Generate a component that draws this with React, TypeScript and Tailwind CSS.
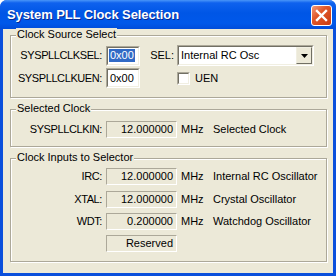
import React from "react";

const face = "bg-[#ECE9D8]";

function Group({ title, className, children }: { title: string; className: string; children?: React.ReactNode }) {
  return (
    <div className={`relative border border-[#ACA899] shadow-[inset_1px_1px_0_#fff,1px_1px_0_#fff] ${className}`}>
      <span className={`absolute left-[5px] top-[-8px] px-[1px] leading-[13px] ${face}`}>{title}</span>
      {children}
    </div>
  );
}

function Sunken2({ className, children }: { className: string; children?: React.ReactNode }) {
  return (
    <div className={`border border-t-[#ACA899] border-l-[#ACA899] border-b-white border-r-white ${className}`}>
      <div className="h-full w-full border border-t-[#716F64] border-l-[#716F64] border-b-[#F1EFE2] border-r-[#F1EFE2] bg-white flex items-center">
        {children}
      </div>
    </div>
  );
}

function ReadBox({ text }: { text: string }) {
  return (
    <div className="ml-[4px] w-[71px] h-[17px] border border-t-[#ACA899] border-l-[#ACA899] border-b-white border-r-white flex items-center justify-end pr-[3px] leading-[13px]">
      {text}
    </div>
  );
}

function ValueRow({ label, value, desc, className = "" }: { label: string; value: string; desc?: string; className?: string }) {
  return (
    <div className={`flex items-center h-[17px] ${className}`}>
      <div className="w-[91px] text-right tracking-[-0.4px] leading-[13px]">{label}</div>
      <ReadBox text={value} />
      {desc !== undefined && (
        <>
          <div className="ml-[4px] w-[32px] leading-[13px]">MHz</div>
          <div className="leading-[13px]">{desc}</div>
        </>
      )}
    </div>
  );
}

export default function App() {
  return (
    <div className="w-[336px] h-[276px] flex flex-col bg-[#0A4FDC] rounded-t-[7px] overflow-hidden font-['Liberation_Sans',Arial,sans-serif] text-[11px] text-black">
      {/* Title bar */}
      <div className="h-[29px] shrink-0 flex items-start justify-between pl-[7px] pr-[4px] bg-[linear-gradient(180deg,#4A96F8_0%,#0F62EE_10%,#0056E6_45%,#0058EA_80%,#004CDA_100%)]">
        <div className="mt-[7px] text-white font-bold text-[13px] tracking-[-0.1px] leading-[16px] [text-shadow:1px_1px_0_#0A2A90]">
          System PLL Clock Selection
        </div>
        <div className="mt-[5px] w-[21px] h-[21px] rounded-[3px] border border-white bg-[linear-gradient(135deg,#F39A7C_0%,#E0582A_40%,#C93A12_100%)] flex items-center justify-center">
          <svg width="19" height="19" viewBox="0 0 19 19">
            <path d="M5 5 L14 14 M14 5 L5 14" stroke="#fff" strokeWidth="2.4" strokeLinecap="square" />
          </svg>
        </div>
      </div>

      {/* Body */}
      <div className={`flex-1 mx-[3px] mb-[3px] ${face} pt-[6px] pl-[7px] pr-[6px]`}>
        <Group title="Clock Source Select" className="h-[63px] pt-[9px]">
          <div className="flex items-center h-[21px]">
            <div className="w-[91px] text-right tracking-[-0.4px] leading-[13px]">SYSPLLCLKSEL:</div>
            <Sunken2 className="ml-[4px] w-[34px] h-[20px]">
              <span className="ml-[1px] bg-[#316AC5] text-white leading-[13px] px-[1px]">0x00</span>
            </Sunken2>
            <div className="w-[37px] text-right pr-[3px] leading-[13px]">SEL:</div>
            <Sunken2 className="w-[137px] h-[21px]">
              <span className="flex-1 pl-[2px] leading-[13px]">Internal RC Osc</span>
              <div className="w-[16px] h-full border border-t-[#F1EFE2] border-l-[#F1EFE2] border-b-[#716F64] border-r-[#716F64] bg-[#ECE9D8] flex items-center justify-center">
                <svg width="7" height="4" viewBox="0 0 7 4">
                  <path d="M0 0 H7 L3.5 4 Z" fill="#000" />
                </svg>
              </div>
            </Sunken2>
          </div>
          <div className="flex items-center h-[20px] mt-[2px]">
            <div className="w-[91px] text-right tracking-[-0.4px] leading-[13px]">SYSPLLCLKUEN:</div>
            <Sunken2 className="ml-[4px] w-[34px] h-[20px]">
              <span className="ml-[2px] leading-[13px]">0x00</span>
            </Sunken2>
            <div className="w-[37px]" />
            <Sunken2 className="w-[13px] h-[13px]" />
            <div className="ml-[5px] leading-[13px]">UEN</div>
          </div>
        </Group>

        <Group title="Selected Clock" className="h-[38px] mt-[11px] pt-[11px]">
          <ValueRow label="SYSPLLCLKIN:" value="12.000000" desc="Selected Clock" />
        </Group>

        <Group title="Clock Inputs to Selector" className="h-[104px] mt-[11px] pt-[9px]">
          <ValueRow label="IRC:" value="12.000000" desc="Internal RC Oscillator" />
          <ValueRow label="XTAL:" value="12.000000" desc="Crystal Oscillator" className="mt-[6px]" />
          <ValueRow label="WDT:" value="0.200000" desc="Watchdog Oscillator" className="mt-[5px]" />
          <ValueRow label="" value="Reserved" className="mt-[5px]" />
        </Group>
      </div>
    </div>
  );
}
